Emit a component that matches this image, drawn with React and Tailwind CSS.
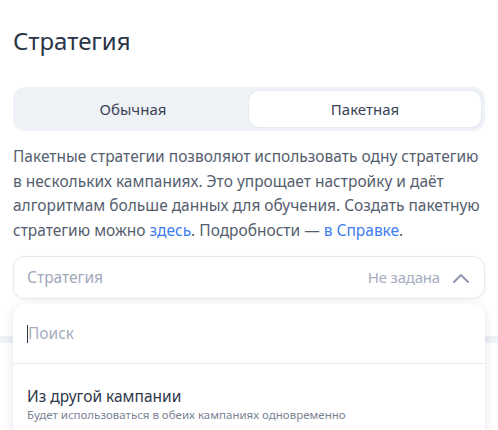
export default function App() {
  return (
    <div
      className="relative w-[498px] h-[430px] overflow-hidden bg-white"
      style={{ fontFamily: '"Noto Sans", "Open Sans", sans-serif' }}
    >
      <div className="px-[13px] pt-[24px]">
        <h1 className="text-[24px] leading-[34px] font-normal text-[#2b3548]">Стратегия</h1>

        <div className="mt-[29px] flex h-[44px] rounded-[12px] bg-[#eef1f6] p-[4px]">
          <button className="flex-1 rounded-[10px] text-[15px] text-[#3a4355]">Обычная</button>
          <button className="flex-1 rounded-[10px] bg-white text-[15px] text-[#3a4355] shadow-[0_0_0_1px_#e6eaf1]">
            Пакетная
          </button>
        </div>

        <p className="mt-[13px] text-[15.5px] leading-[24.5px] text-[#555e6e]">
          Пакетные стратегии позволяют использовать одну стратегию в нескольких кампаниях. Это упрощает настройку и даёт
          алгоритмам больше данных для обучения. Создать пакетную стратегию можно{' '}
          <span className="text-[#3d7df0]">здесь</span>. Подробности —{' '}
          <span className="text-[#3d7df0]">в Справке</span>.
        </p>

        <div className="relative mt-[14px]">
          <div className="flex h-[43px] items-center rounded-[12px] border border-[#e6e9ef] bg-white pl-[13px] pr-[14px] shadow-[0_1px_3px_rgba(30,40,70,0.06)]">
            <span className="flex-1 text-[15.5px] text-[#a1a9ba]">Стратегия</span>
            <span className="text-[15px] tracking-[-0.2px] text-[#a4acbd]">Не задана</span>
            <svg className="ml-[12px]" width="18" height="12" viewBox="0 0 18 12" fill="none">
              <path d="M2 10 L9 3 L16 10" stroke="#8f98aa" strokeWidth="2" strokeLinecap="round" strokeLinejoin="round" />
            </svg>
          </div>

          <div className="absolute left-0 right-0 top-[48px] z-10 h-[200px] rounded-t-[12px] bg-white shadow-[0_2px_10px_rgba(40,55,90,0.14)]">
            <div className="flex h-[60px] items-center border-b border-[#e6e9f0] px-[14px]">
              <span className="h-[18px] w-px bg-[#2b3546]" />
              <span className="text-[15.5px] text-[#a6aebe]">Поиск</span>
            </div>
            <div className="px-[14px] pt-[22px]">
              <div className="text-[15.5px] leading-[20px] text-[#2f3849]">Из другой кампании</div>
              <div className="mt-[1px] text-[11.5px] leading-[16px] text-[#7a8394]">
                Будет использоваться в обеих кампаниях одновременно
              </div>
            </div>
          </div>
        </div>
      </div>

      <div className="mt-[37px] h-[7px] bg-[#eef1f6]" />
    </div>
  );
}
